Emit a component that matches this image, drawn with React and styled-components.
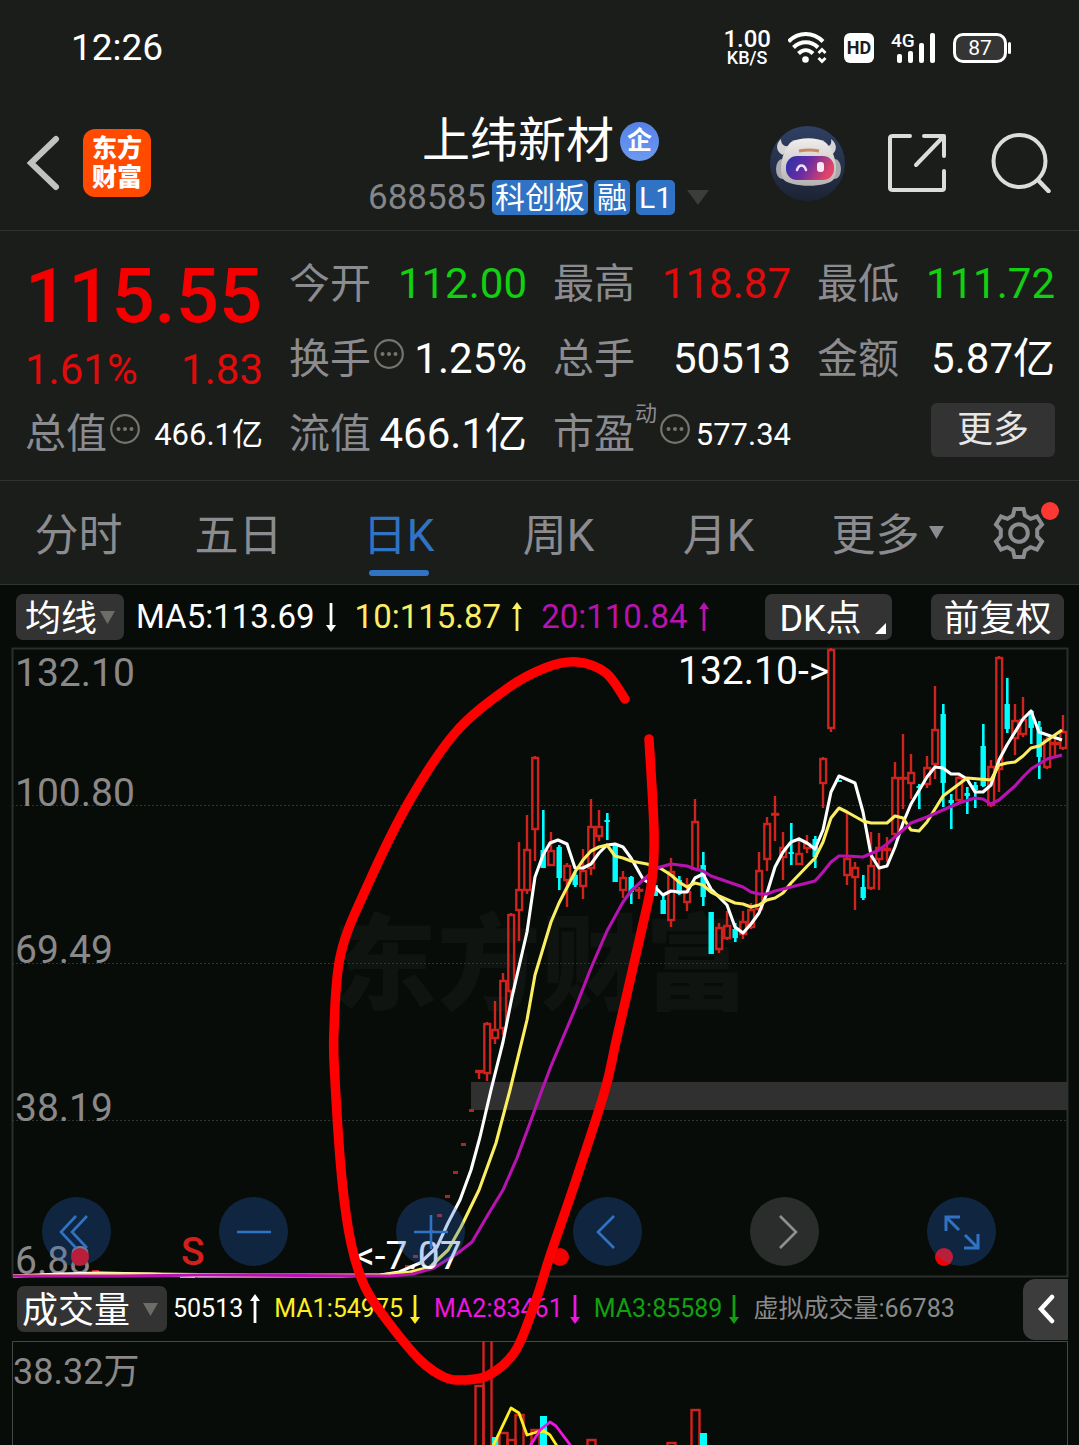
import React from "react";
import styled, { createGlobalStyle } from "styled-components";

const GlobalStyle = createGlobalStyle`
  * { box-sizing: border-box; }
  body {
    margin: 0;
    background: #070c08;
    color: #fff;
    font-family: Roboto, "Noto Sans CJK SC", sans-serif;
    line-height: 1.2;
  }
  button, select {
    margin: 0;
    padding: 0;
    border: 0;
    background: none;
    color: inherit;
    font: inherit;
    cursor: pointer;
  }
  svg { display: block; }
`;

const UP = "#d0231e";
const DOWN = "#00ffff";

const Page = styled.div`
  overflow: hidden;
`;

const Panel = styled.section`
  background: #1a1d1a;
  border-bottom: 1px solid #303330;
`;

/* Status bar */

const StatusBar = styled.div`
  display: flex;
  align-items: center;
  justify-content: space-between;
  height: 96px;
  padding: 0 68px 0 71px;
  background: #1a1d1a;
`;

const Clock = styled.time`
  font-size: 37px;
`;

const StatusIcons = styled.div`
  display: flex;
  align-items: center;
  gap: 17px;
`;

const NetSpeed = styled.div`
  display: flex;
  flex-direction: column;
  align-items: center;
  font-weight: 500;
  font-size: 18px;
  line-height: 18px;
`;

const NetValue = styled.span`
  font-size: 24px;
  line-height: 20px;
`;

const HdBadge = styled.span`
  width: 30px;
  border-radius: 6px;
  background: #fff;
  color: #1a1d1a;
  font-size: 18px;
  font-weight: 700;
  line-height: 30px;
  text-align: center;
`;

const Battery = styled.div`
  display: flex;
  align-items: center;
  gap: 1px;
`;

const BatteryCell = styled.span`
  width: 54px;
  border: 3px solid #fff;
  border-radius: 10px;
  background: #353535;
  font-size: 21px;
  line-height: 24px;
  text-align: center;
`;

const BatteryCap = styled.span`
  width: 3px;
  height: 12px;
  border-radius: 2px;
  background: #fff;
`;

/* Header */

const Header = styled.header`
  display: grid;
  grid-template-columns: 1fr auto 1fr;
  align-items: center;
  height: 135px;
  padding: 0 28px 0 26px;
  background: #1a1d1a;
  border-bottom: 1px solid #303330;
`;

const HeaderSide = styled.div`
  display: flex;
  align-items: center;
  justify-content: ${(p) => (p.$end ? "flex-end" : "flex-start")};
  gap: ${(p) => (p.$end ? "43px" : "22px")};
`;

const IconButton = styled.button`
  display: flex;
`;

const Logo = styled.a`
  width: 68px;
  height: 68px;
  padding: 5px 0;
  border-radius: 12px;
  background: #ff4a00;
  color: #fff;
  font-size: 25px;
  font-weight: 900;
  line-height: 29px;
  text-align: center;
  text-decoration: none;
`;

const LogoLine = styled.span`
  display: block;
`;

const TitleBlock = styled.div`
  display: flex;
  flex-direction: column;
  align-items: center;
`;

const TitleRow = styled.div`
  display: flex;
  align-items: center;
  gap: 6px;
  height: 68px;
  padding: 2px 0 0 4px;
`;

const StockName = styled.h1`
  margin: 0;
  font-size: 48px;
  font-weight: 400;
  line-height: 60px;
`;

const FirmBadge = styled.span`
  width: 39px;
  height: 39px;
  border-radius: 50%;
  background: linear-gradient(#5581e6, #6c9af2);
  font-size: 25px;
  font-weight: 700;
  line-height: 38px;
  text-align: center;
`;

const CodeRow = styled.div`
  display: flex;
  align-items: center;
  gap: 6px;
  height: 46px;
`;

const Code = styled.span`
  padding-top: 2px;
  color: #85868b;
  font-size: 35px;
`;

const Tag = styled.span`
  padding: 0 3px;
  border-radius: 5px;
  background: #3073c4;
  font-size: 30px;
  line-height: 35px;
`;

const CodeToggle = styled.button`
  display: flex;
  padding: 0 0 0 6px;
`;

/* Quote */

const Quote = styled(Panel)`
  display: grid;
  grid-template-columns: repeat(4, minmax(0, 1fr));
  grid-template-rows: repeat(3, 75px);
  column-gap: 26px;
  padding: 16px 24px 8px 25px;
`;

const PriceBlock = styled.div`
  grid-row: span 2;
`;

const Price = styled.div`
  color: #f40000;
  font-size: 76px;
  font-weight: 500;
  line-height: 98px;
`;

const Change = styled.div`
  display: flex;
  justify-content: space-between;
  color: #e00b0b;
  font-size: 42px;
  line-height: 50px;
`;

const Metric = styled.div`
  display: flex;
  align-items: center;
  white-space: nowrap;
`;

const MetricLabel = styled.span`
  color: #8b8b90;
  font-size: 41px;
`;

const Sup = styled.span`
  align-self: flex-start;
  color: #8b8b90;
  font-size: 22px;
  line-height: 34px;
`;

const HintButton = styled.button`
  display: flex;
  padding: 0 0 11px 3px;
`;

const MetricValue = styled.span`
  margin-left: auto;
  color: ${(p) => p.$color || "#fff"};
  font-size: ${(p) => (p.$small ? "31px" : "42px")};
`;

const MoreButton = styled.button`
  align-self: start;
  justify-self: end;
  width: 124px;
  margin-top: 6px;
  border-radius: 6px;
  background: #333;
  color: #e6e6e6;
  font-size: 36px;
  line-height: 54px;
`;

/* Period tabs */

const Tabs = styled.nav`
  display: grid;
  grid-template-columns: repeat(5, 160fr) 178fr 81fr;
  height: 104px;
  padding-right: 20px;
  background: #1a1d1a;
  border-bottom: 1px solid #303330;
`;

const Tab = styled.button`
  position: relative;
  display: flex;
  align-items: center;
  justify-content: center;
  gap: 9px;
  padding: 8px 3px 0 0;
  color: ${(p) => (p.$active ? "#3073c4" : "#8b8b90")};
  font-size: 44px;

  svg {
    margin-bottom: 8px;
  }
`;

const TabLine = styled.span`
  position: absolute;
  bottom: 8px;
  width: 60px;
  height: 6px;
  border-radius: 3px;
  background: #3073c4;
`;

const SettingsButton = styled.button`
  position: relative;
  display: flex;
  align-items: center;
  justify-content: center;
`;

const Dot = styled.span`
  position: absolute;
  top: 21px;
  right: 0;
  width: 18px;
  height: 18px;
  border-radius: 50%;
  background: #fb3832;
`;

/* Chart area */

const ChartArea = styled.main`
  position: relative;
`;

const IndicatorBar = styled.div`
  display: flex;
  align-items: center;
  gap: 12px;
  height: 63px;
  padding: 0 15px 0 16px;
  white-space: nowrap;
`;

const VolumeBar = styled(IndicatorBar)`
  gap: 6px;
  height: 64px;
  padding: 0 11px 0 17px;
`;

const SelectBox = styled.label`
  position: relative;
  display: flex;
  flex: none;
`;

const Select = styled.select`
  appearance: none;
  width: ${(p) => p.$width}px;
  height: 46px;
  padding-top: 4px;
  padding-left: ${(p) => p.$inset}px;
  border-radius: 7px;
  background: #333;
  color: #fff;
  font-size: 36px;
`;

const SelectCaret = styled.span`
  position: absolute;
  top: 17px;
  right: 9px;
  pointer-events: none;
`;

const MaItem = styled.span`
  display: flex;
  align-items: center;
  gap: 10px;
  margin-right: 6px;
  color: ${(p) => p.$color};
  font-size: 33px;
`;

const ToolButton = styled.button`
  position: relative;
  width: ${(p) => p.$width}px;
  height: 46px;
  padding-top: 4px;
  padding-right: ${(p) => p.$padRight || 0}px;
  border-radius: 7px;
  background: #333;
  font-size: 36px;
  line-height: 42px;
  text-align: center;
`;

const ToolGroup = styled.div`
  display: flex;
  gap: 39px;
  margin-left: auto;
`;

const Corner = styled.span`
  position: absolute;
  right: 6px;
  bottom: 6px;
  border-bottom: 11px solid #fff;
  border-left: 11px solid transparent;
`;

const VolItem = styled.span`
  display: flex;
  align-items: center;
  gap: 6px;
  margin-right: 7px;
  color: ${(p) => p.$color};
  font-size: 25px;
`;

const VolNote = styled.span`
  color: #8a8a8a;
  font-size: 25px;
`;

const SideHandle = styled.button`
  display: flex;
  flex: none;
  align-items: center;
  justify-content: center;
  width: 45px;
  height: 61px;
  margin-left: auto;
  border-radius: 12px 0 0 12px;
  background: #3c3c3c;
`;

const ChartFrame = styled.div`
  position: relative;
  margin: 0 11px 0 12px;
`;

const ChartSvg = styled.svg`
  width: 100%;
  height: auto;
  overflow: ${(p) => (p.$open ? "visible" : "hidden")};
  font-family: Roboto, "Noto Sans CJK SC", sans-serif;
`;

const ChartControls = styled.div`
  position: absolute;
  right: 72px;
  bottom: 11px;
  left: 30px;
  display: flex;
  justify-content: space-between;
`;

const RoundButton = styled.button`
  display: flex;
  align-items: center;
  justify-content: center;
  width: 69px;
  height: 69px;
  border-radius: 50%;
  background: ${(p) => (p.$muted ? "rgba(144, 144, 148, 0.26)" : "rgba(40, 105, 205, 0.29)")};
  color: ${(p) => (p.$muted ? "#909090" : "#3073c4")};
`;

const Marker = styled.svg`
  position: absolute;
  top: 0;
  left: 0;
  width: 100%;
  height: auto;
  pointer-events: none;
`;

/* x = FIRST_X + index * STEP; rows are [index, high, bodyTop, bodyBottom, low, rising] */
const FIRST_X = 479;
const STEP = 8;
const CANDLES = [
  [0, 1070, 1070, 1073, 1079, 1], [1, 1022, 1023, 1074, 1081, 1], [2, 1001, 1029, 1039, 1044, 1],
  [3, 973, 980, 1029, 1035, 1], [4, 913, 914, 992, 997, 1], [5, 842, 889, 911, 941, 1],
  [6, 815, 849, 891, 894, 1], [7, 756, 757, 830, 861, 1], [8, 810, 850, 868, 868, 0],
  [9, 832, 850, 866, 866, 1], [10, 845, 847, 878, 890, 0], [11, 863, 865, 881, 907, 1],
  [12, 870, 875, 885, 887, 0], [13, 849, 870, 887, 899, 1], [14, 799, 826, 869, 875, 1],
  [15, 810, 826, 837, 841, 1], [16, 813, 820, 822, 840, 0], [17, 844, 845, 882, 882, 0],
  [18, 871, 877, 891, 898, 1], [19, 876, 877, 892, 904, 0], [20, 887, 889, 891, 899, 1],
  [22, 885, 885, 896, 896, 0], [23, 893, 900, 914, 914, 0], [24, 858, 871, 921, 927, 1],
  [25, 876, 880, 894, 895, 0], [26, 878, 891, 903, 911, 1], [27, 799, 821, 870, 870, 1],
  [28, 852, 865, 897, 906, 0], [29, 912, 912, 954, 954, 0], [30, 923, 927, 950, 953, 1],
  [31, 911, 925, 939, 940, 1], [32, 923, 929, 938, 942, 0], [33, 911, 921, 935, 939, 1],
  [34, 903, 909, 928, 929, 1], [35, 852, 870, 910, 911, 1], [36, 817, 823, 860, 871, 1],
  [37, 796, 813, 815, 841, 1], [38, 832, 847, 858, 880, 1], [39, 823, 852, 854, 865, 0],
  [40, 837, 853, 865, 865, 1], [41, 835, 843, 849, 853, 1], [42, 836, 839, 857, 868, 0],
  [43, 757, 758, 784, 808, 1], [44, 648, 649, 729, 732, 1], [45, 780, 780, 782, 782, 0],
  [46, 811, 858, 876, 885, 1], [47, 862, 867, 878, 910, 1], [48, 875, 887, 898, 900, 0],
  [49, 832, 865, 889, 890, 1], [50, 833, 847, 860, 890, 1], [51, 837, 848, 851, 862, 1],
  [52, 762, 777, 835, 837, 1], [53, 734, 777, 779, 809, 1], [54, 754, 772, 784, 799, 1],
  [55, 784, 786, 788, 809, 0], [56, 756, 767, 785, 788, 1], [57, 686, 729, 765, 779, 1],
  [58, 704, 714, 783, 807, 0], [59, 794, 800, 803, 829, 0], [60, 774, 777, 801, 802, 1],
  [61, 787, 793, 796, 814, 0], [62, 782, 785, 790, 808, 0], [63, 724, 746, 786, 787, 0],
  [64, 760, 766, 806, 807, 1], [65, 656, 657, 770, 792, 1], [66, 678, 704, 729, 733, 0],
  [67, 704, 720, 739, 755, 1], [68, 697, 719, 735, 737, 1], [69, 710, 711, 728, 744, 0],
  [70, 721, 727, 757, 779, 0], [71, 737, 739, 768, 769, 1], [72, 739, 742, 745, 757, 1],
  [73, 715, 731, 749, 750, 1],
];

const LIMIT_DAYS = [
  [471, 1110], [463, 1144], [455, 1172], [447, 1196], [439, 1215], [431, 1231], [415, 1256], [407, 1266],
];

const MA5 = [
  [13, 1276], [60, 1274], [100, 1273], [150, 1274], [200, 1276], [340, 1276], [380, 1275], [399, 1272], [420, 1263],
  [437, 1247], [448, 1223], [460, 1200], [471, 1170], [480, 1137], [491, 1090], [503, 1042], [512, 997],
  [527, 932], [535, 877], [543, 855], [550, 843], [558, 840], [567, 844], [575, 868], [583, 868],
  [591, 864], [599, 853], [607, 845], [615, 844], [623, 847], [631, 858], [643, 879], [655, 887],
  [663, 895], [671, 891], [679, 892], [687, 892], [695, 878], [703, 874], [711, 889], [727, 905],
  [735, 927], [743, 933], [751, 924], [759, 913], [767, 893], [775, 867], [783, 852], [791, 842],
  [799, 839], [807, 843], [815, 849], [823, 830], [831, 792], [839, 776], [855, 783], [863, 812],
  [871, 855], [879, 868], [887, 866], [895, 847], [903, 823], [911, 804], [927, 777], [935, 767],
  [943, 768], [951, 774], [959, 774], [967, 779], [975, 792], [983, 792], [991, 785], [999, 760],
  [1007, 745], [1023, 719], [1031, 711], [1039, 732], [1062, 740],
];

const MA10 = [
  [13, 1276], [60, 1275], [100, 1274], [150, 1274], [250, 1275], [380, 1275], [410, 1272], [430, 1267], [448, 1250],
  [461, 1227], [479, 1190], [496, 1143], [510, 1090], [527, 1020], [535, 975], [551, 922], [559, 903],
  [575, 872], [583, 860], [591, 851], [599, 847], [607, 845], [615, 856], [623, 858], [631, 861],
  [647, 864], [660, 868], [671, 875], [679, 882], [687, 887], [695, 883], [703, 885], [711, 892],
  [719, 896], [735, 903], [743, 904], [751, 907], [759, 905], [767, 900], [775, 898], [783, 893],
  [791, 883], [815, 858], [823, 842], [831, 818], [839, 808], [847, 812], [863, 821], [871, 823],
  [887, 823], [895, 816], [903, 818], [911, 830], [919, 831], [927, 822], [943, 796], [967, 778],
  [991, 780], [999, 765], [1007, 763], [1015, 762], [1023, 756], [1031, 748], [1039, 746], [1062, 730],
];

const MA20 = [
  [13, 1276], [120, 1276], [200, 1275], [390, 1276], [413, 1274], [434, 1268], [458, 1253], [472, 1242],
  [489, 1213], [503, 1190], [517, 1158], [530, 1123], [542, 1090], [551, 1066], [575, 1009], [591, 968],
  [607, 931], [623, 902], [631, 891], [643, 880], [657, 868], [671, 864], [687, 866], [695, 869],
  [703, 871], [711, 876], [743, 887], [751, 892], [759, 894], [767, 894], [775, 891], [815, 881],
  [823, 872], [831, 862], [839, 856], [847, 856], [863, 857], [879, 850], [887, 844], [895, 837],
  [911, 823], [927, 817], [943, 810], [959, 803], [975, 798], [983, 799], [991, 804], [999, 800],
  [1015, 786], [1023, 777], [1031, 769], [1047, 759], [1062, 755],
];

const LOOP = [
  [625, 699], [606, 673], [577, 662], [545, 668], [505, 690], [455, 733], [410, 800], [370, 880], [341, 953],
  [334, 1030], [335, 1080], [342, 1180], [351, 1243], [365, 1287], [389, 1323], [420, 1360], [444, 1377],
  [463, 1380], [489, 1375], [516, 1350], [537, 1297], [550, 1256], [576, 1180], [605, 1090], [617, 1037],
  [640, 937], [652, 880], [654, 830], [649, 739],
];

const VOL_BARS = [
  [479, 1386, 1], [487, 1336, 1], [495, 1437, 0], [503, 1433, 1], [511, 1440, 1], [519, 1415, 1],
  [535, 1430, 1], [543, 1416, 0], [591, 1440, 1], [671, 1443, 1], [695, 1410, 1], [703, 1433, 0],
];

const line = (pts) => "M" + pts.map((p) => p.join(" ")).join("L");

function smooth(pts) {
  let d = `M${pts[0][0]} ${pts[0][1]}`;
  for (let i = 0; i < pts.length - 1; i++) {
    const a = pts[i - 1] || pts[i];
    const b = pts[i];
    const c = pts[i + 1];
    const e = pts[i + 2] || c;
    d += `C${b[0] + (c[0] - a[0]) / 6} ${b[1] + (c[1] - a[1]) / 6} ${c[0] - (e[0] - b[0]) / 6} ${c[1] - (e[1] - b[1]) / 6} ${c[0]} ${c[1]}`;
  }
  return d;
}

function Caret({ width = 15, height = 13, color = "#6b6d69" }) {
  return (
    <svg width={width} height={height} viewBox="0 0 15 13" preserveAspectRatio="none" aria-hidden="true">
      <path d="M0 0H15L7.5 13Z" fill={color} />
    </svg>
  );
}

function Arrow({ down }) {
  return (
    <svg width="12" height={30} viewBox="0 0 12 30" aria-hidden="true">
      <g fill="currentColor" transform={down ? "rotate(180 6 15)" : undefined}>
        <path d="M6 0L11 7H1Z" />
        <path d="M4.6 5H7.4V29H4.6Z" />
      </g>
    </svg>
  );
}

function Hint() {
  return (
    <HintButton aria-label="说明">
      <svg width="30" height="30" viewBox="0 0 30 30" fill="#77736e">
        <circle cx="15" cy="15" r="13.8" fill="none" stroke="#77736e" strokeWidth="2.2" />
        <circle cx="8.5" cy="15" r="2" />
        <circle cx="15" cy="15" r="2" />
        <circle cx="21.5" cy="15" r="2" />
      </svg>
    </HintButton>
  );
}

function WifiIcon() {
  return (
    <svg width="39" height="32" viewBox="1 0 39 32" fill="none" stroke="#fff" strokeWidth="4">
      <path d="M1.5 9.5C11.5 -0.5 26 -0.5 36 9.5" />
      <path d="M6.5 15.5C13.5 8.5 24 8.5 31 15.5" />
      <path d="M11.5 21.5C16 17 21.5 17 26 21.5" />
      <circle cx="18.5" cy="27.5" r="3.3" fill="#fff" stroke="none" />
      <path d="M31.5 21L35 17.5L38.5 21M31.5 26L35 29.5L38.5 26" strokeWidth="2.8" />
    </svg>
  );
}

function SignalIcon() {
  return (
    <svg width="45" height="32" viewBox="0 0 45 32" fill="#fff" overflow="visible">
      <text x="0" y="15" fontSize="19" fontWeight="500" fontFamily="Roboto, sans-serif">4G</text>
      <rect x="6" y="22" width="5" height="9" rx="2" />
      <rect x="17" y="19" width="5" height="12" rx="2" />
      <rect x="28" y="11" width="5" height="20" rx="2" />
      <rect x="39" y="1" width="5" height="30" rx="2" />
    </svg>
  );
}

function RobotIcon() {
  return (
    <svg width="75" height="75" viewBox="0 0 75 75">
      <defs>
        <linearGradient id="sky" x1="0" y1="0" x2="0" y2="1">
          <stop offset="0" stopColor="#2f4063" />
          <stop offset="1" stopColor="#1d2334" />
        </linearGradient>
        <linearGradient id="visor" x1="0" y1="0" x2="1" y2="0.3">
          <stop offset="0" stopColor="#2434a6" />
          <stop offset="0.5" stopColor="#6a2ba4" />
          <stop offset="1" stopColor="#e04468" />
        </linearGradient>
        <linearGradient id="shell" x1="0" y1="0" x2="0" y2="1">
          <stop offset="0" stopColor="#f0eeec" />
          <stop offset="1" stopColor="#b5b1b0" />
        </linearGradient>
      </defs>
      <circle cx="37.5" cy="37.5" r="37.5" fill="url(#sky)" />
      <ellipse cx="12" cy="43" rx="6" ry="10" fill="#a9a8ad" />
      <ellipse cx="65" cy="43" rx="6" ry="10" fill="#a9a8ad" />
      <path d="M11 13C5 18 6 26 13 29L19 20C14 21 11 18 11 13Z" fill="#d5d3d4" />
      <path d="M61 13C68 18 67 26 61 29L55 20C60 21 62 18 61 13Z" fill="#d5d3d4" />
      <path d="M21 16C30 11 47 11 55 16C64 23 69 42 64 53C58 62 20 62 13 53C8 42 13 23 21 16Z" fill="url(#shell)" />
      <path d="M29 25Q39 23 49 25" stroke="#c68b5e" strokeWidth="3" fill="none" />
      <rect x="16" y="30" width="48" height="24" rx="11" fill="url(#visor)" />
      <path d="M27 44C29 38 34 38 36 44" stroke="#e8e2ff" strokeWidth="2.5" fill="none" strokeLinecap="round" />
      <rect x="47" y="36" width="7" height="10" rx="3" fill="#f7e9f4" />
    </svg>
  );
}

function GearIcon() {
  return (
    <svg width="54" height="54" viewBox="0 0 54 54" fill="none" stroke="#8b8b90" strokeWidth="4">
      <path d="M22.5 3H31.5L33 9.5L38.5 12.8L45 10.5L50 18.5L45.2 23.5V30.5L50 35.5L45 43.5L38.5 41.2L33 44.5L31.5 51H22.5L21 44.5L15.5 41.2L9 43.5L4 35.5L8.8 30.5V23.5L4 18.5L9 10.5L15.5 12.8L21 9.5Z" />
      <circle cx="27" cy="27" r="8.8" />
    </svg>
  );
}

function Candle({ data }) {
  const [i, high, top, bottom, low, rising] = data;
  const x = FIRST_X + i * STEP;
  if (!rising) {
    return (
      <g fill={DOWN}>
        <rect x={x - 1} y={high} width="2.6" height={low - high} />
        <rect x={x - 2.5} y={top} width="5.4" height={Math.max(bottom - top, 2)} />
      </g>
    );
  }
  return (
    <g fill="none" stroke={UP} strokeWidth="2.4">
      <path d={`M${x} ${high}V${top}M${x} ${bottom}V${low}`} />
      <rect x={x - 2.7} y={top + 1} width="5.8" height={Math.max(bottom - top - 2, 0.6)} />
    </g>
  );
}

function PriceChart() {
  return (
    <ChartSvg $open viewBox="12 648 1056 629" role="img" aria-label="上纬新材 日K">
      <rect x="12.5" y="648.5" width="1055" height="628" fill="none" stroke="#2c2e2c" strokeWidth="2" />
      <text x="333" y="1002" fontSize="104" fontWeight="900" fill="#0f1410">东方财富</text>
      <path d="M12 805.5H1067M12 963.5H1067M12 1120.5H1067" stroke="#303330" strokeDasharray="2 2" />
      <g fill="#8a8888" fontSize="39">
        <text x="15" y="686">132.10</text>
        <text x="15" y="806">100.80</text>
        <text x="15" y="963">69.49</text>
        <text x="15" y="1121">38.19</text>
        <text x="15" y="1274">6.88</text>
      </g>
      <rect x="471" y="1082" width="597" height="28" fill="#303030" />
      {CANDLES.map((c) => <Candle key={c[0]} data={c} />)}
      {LIMIT_DAYS.map(([x, y]) => <rect key={x} x={x - 2} y={y - 1} width="5" height="3" fill="#b3231f" />)}
      <path d="M13 1276H20M180 1277H195M335 1276H345" stroke={DOWN} strokeWidth="2" />
      <path d="M92 1271.5H99" stroke={UP} strokeWidth="3" />
      <g fill="none" strokeWidth="3.1" strokeLinejoin="round">
        <path d={line(MA5)} stroke="#fff" />
        <path d={line(MA10)} stroke="#fbee62" />
        <path d={line(MA20)} stroke="#b812b0" />
      </g>
      <g fill="#fff" fontSize="39">
        <text x="678" y="684">{"132.10->"}</text>
        <text x="355" y="1269">{"<-7.07"}</text>
      </g>
      <text x="181" y="1265" fontSize="39" fontWeight="500" fill="#d4201c">S</text>
      <g fill="#f40000">
        <circle cx="80" cy="1257" r="9" />
        <circle cx="560" cy="1257" r="9" />
        <circle cx="944" cy="1257" r="9" />
      </g>
    </ChartSvg>
  );
}

function VolumeChart() {
  return (
    <ChartSvg viewBox="12 1341 1056 104" role="img" aria-label="成交量">
      <path d="M12.5 1446V1341.5H1067.5V1446" fill="none" stroke="#464846" strokeWidth="1" />
      <text x="13" y="1384" fontSize="36" fill="#8a8888">38.32万</text>
      {VOL_BARS.map(([x, y, up]) =>
        up ? (
          <rect key={x} x={x - 3.5} y={y} width="8" height="120" fill="none" stroke={UP} strokeWidth="2.4" />
        ) : (
          <rect key={x} x={x - 3} y={y} width="7" height="120" fill={DOWN} />
        )
      )}
      <g fill="none" strokeWidth="2.8" strokeLinejoin="round">
        <path d="M493 1446L511 1408L519 1413L527 1435L537 1432L544 1431L550 1435L557 1446" stroke="#ffee22" />
        <path d="M530 1446L540 1430L550 1422L556 1426L571 1446" stroke="#f015e0" />
      </g>
    </ChartSvg>
  );
}

const TABS = ["分时", "五日", "日K", "周K", "月K"];

function GlyphIcon({ d, width = 2.6 }) {
  return (
    <svg width="36" height="36" viewBox="0 0 36 36" fill="none" stroke="currentColor" strokeWidth={width}>
      <path d={d} />
    </svg>
  );
}

export default function App() {
  return (
    <Page>
      <GlobalStyle />
      <StatusBar>
        <Clock>12:26</Clock>
        <StatusIcons>
          <NetSpeed>
            <NetValue>1.00</NetValue>
            <span>KB/S</span>
          </NetSpeed>
          <WifiIcon />
          <HdBadge>HD</HdBadge>
          <SignalIcon />
          <Battery>
            <BatteryCell>87</BatteryCell>
            <BatteryCap />
          </Battery>
        </StatusIcons>
      </StatusBar>

      <Header>
        <HeaderSide>
          <IconButton aria-label="返回">
            <svg width="35" height="56" viewBox="0 0 35 56" fill="none" stroke="#c2c2c2" strokeWidth="6">
              <path d="M30 4L5 28L30 52" strokeLinecap="round" />
            </svg>
          </IconButton>
          <Logo href="#">
            <LogoLine>东方</LogoLine>
            <LogoLine>财富</LogoLine>
          </Logo>
        </HeaderSide>
        <TitleBlock>
          <TitleRow>
            <StockName>上纬新材</StockName>
            <FirmBadge>企</FirmBadge>
          </TitleRow>
          <CodeRow>
            <Code>688585</Code>
            <Tag>科创板</Tag>
            <Tag>融</Tag>
            <Tag>L1</Tag>
            <CodeToggle aria-label="展开">
              <Caret width={22} height={15} color="#3b3d3b" />
            </CodeToggle>
          </CodeRow>
        </TitleBlock>
        <HeaderSide $end>
          <IconButton aria-label="助手"><RobotIcon /></IconButton>
          <IconButton aria-label="分享">
            <svg width="60" height="60" viewBox="0 0 60 60" fill="none" stroke="#dcdcdc" strokeWidth="4" strokeLinecap="round" strokeLinejoin="round">
              <path d="M22 3H5Q2 3 2 5V55Q2 57 5 57H54Q56 57 56 55V38" />
              <path d="M36 3H56V23M55 4L28 32" />
            </svg>
          </IconButton>
          <IconButton aria-label="搜索">
            <svg width="60" height="60" viewBox="0 0 60 60" fill="none" stroke="#dcdcdc" strokeWidth="4" strokeLinecap="round">
              <circle cx="28.5" cy="28" r="26" />
              <path d="M47 47L57.5 58" strokeWidth="4.5" />
            </svg>
          </IconButton>
        </HeaderSide>
      </Header>

      <Quote>
        <PriceBlock>
          <Price>115.55</Price>
          <Change><span>1.61%</span><span>1.83</span></Change>
        </PriceBlock>
        <Metric><MetricLabel>今开</MetricLabel><MetricValue $color="#12cf12">112.00</MetricValue></Metric>
        <Metric><MetricLabel>最高</MetricLabel><MetricValue $color="#e00b0b">118.87</MetricValue></Metric>
        <Metric><MetricLabel>最低</MetricLabel><MetricValue $color="#12cf12">111.72</MetricValue></Metric>
        <Metric><MetricLabel>换手</MetricLabel><Hint /><MetricValue>1.25%</MetricValue></Metric>
        <Metric><MetricLabel>总手</MetricLabel><MetricValue>50513</MetricValue></Metric>
        <Metric><MetricLabel>金额</MetricLabel><MetricValue>5.87亿</MetricValue></Metric>
        <Metric><MetricLabel>总值</MetricLabel><Hint /><MetricValue $small>466.1亿</MetricValue></Metric>
        <Metric><MetricLabel>流值</MetricLabel><MetricValue>466.1亿</MetricValue></Metric>
        <Metric><MetricLabel>市盈</MetricLabel><Sup>动</Sup><Hint /><MetricValue $small>577.34</MetricValue></Metric>
        <MoreButton>更多</MoreButton>
      </Quote>

      <Tabs>
        {TABS.map((name) => (
          <Tab key={name} $active={name === "日K"}>
            {name}
            {name === "日K" && <TabLine />}
          </Tab>
        ))}
        <Tab>更多<Caret color="#8b8b90" /></Tab>
        <SettingsButton aria-label="设置"><GearIcon /><Dot /></SettingsButton>
      </Tabs>

      <ChartArea>
        <IndicatorBar>
          <SelectBox>
            <Select $width={108} $inset={9} aria-label="主图指标"><option>均线</option></Select>
            <SelectCaret><Caret /></SelectCaret>
          </SelectBox>
          <MaItem $color="#fff">MA5:113.69<Arrow down /></MaItem>
          <MaItem $color="#fbee62">10:115.87<Arrow /></MaItem>
          <MaItem $color="#b812b0">20:110.84<Arrow /></MaItem>
          <ToolGroup>
            <ToolButton $width={127} $padRight={16}>DK点<Corner /></ToolButton>
            <ToolButton $width={133}>前复权</ToolButton>
          </ToolGroup>
        </IndicatorBar>

        <ChartFrame>
          <PriceChart />
          <ChartControls>
            <RoundButton aria-label="最早"><GlyphIcon d="M17 2L2 18L17 34M28 2L13 18L28 34" /></RoundButton>
            <RoundButton aria-label="缩小"><GlyphIcon d="M1 18H35" /></RoundButton>
            <RoundButton aria-label="放大"><GlyphIcon d="M1 18H35M18 1V35" /></RoundButton>
            <RoundButton aria-label="向左"><GlyphIcon d="M24 2L8 18L24 34" /></RoundButton>
            <RoundButton $muted aria-label="向右"><GlyphIcon d="M13 2L29 18L13 34" /></RoundButton>
            <RoundButton aria-label="全屏"><GlyphIcon width={3} d="M2 17V3H16M2 3L15 16M34 20V34H20M34 34L21 21" /></RoundButton>
          </ChartControls>
        </ChartFrame>

        <VolumeBar>
          <SelectBox>
            <Select $width={150} $inset={5} aria-label="副图指标"><option>成交量</option></Select>
            <SelectCaret><Caret /></SelectCaret>
          </SelectBox>
          <VolItem $color="#fff">50513<Arrow /></VolItem>
          <VolItem $color="#ffee22">MA1:54975<Arrow down /></VolItem>
          <VolItem $color="#f015e0">MA2:83461<Arrow down /></VolItem>
          <VolItem $color="#12a012">MA3:85589<Arrow down /></VolItem>
          <VolNote>虚拟成交量:66783</VolNote>
          <SideHandle aria-label="展开侧栏">
            <svg width="18" height="30" viewBox="0 0 18 30" fill="none" stroke="#fff" strokeWidth="4.5">
              <path d="M15 3L4 15L15 27" strokeLinecap="round" />
            </svg>
          </SideHandle>
        </VolumeBar>

        <ChartFrame>
          <VolumeChart />
        </ChartFrame>

        <Marker viewBox="0 585 1079 860" aria-hidden="true">
          <path d={smooth(LOOP)} fill="none" stroke="#ff0000" strokeWidth="9.5" strokeLinecap="round" />
        </Marker>
      </ChartArea>
    </Page>
  );
}
